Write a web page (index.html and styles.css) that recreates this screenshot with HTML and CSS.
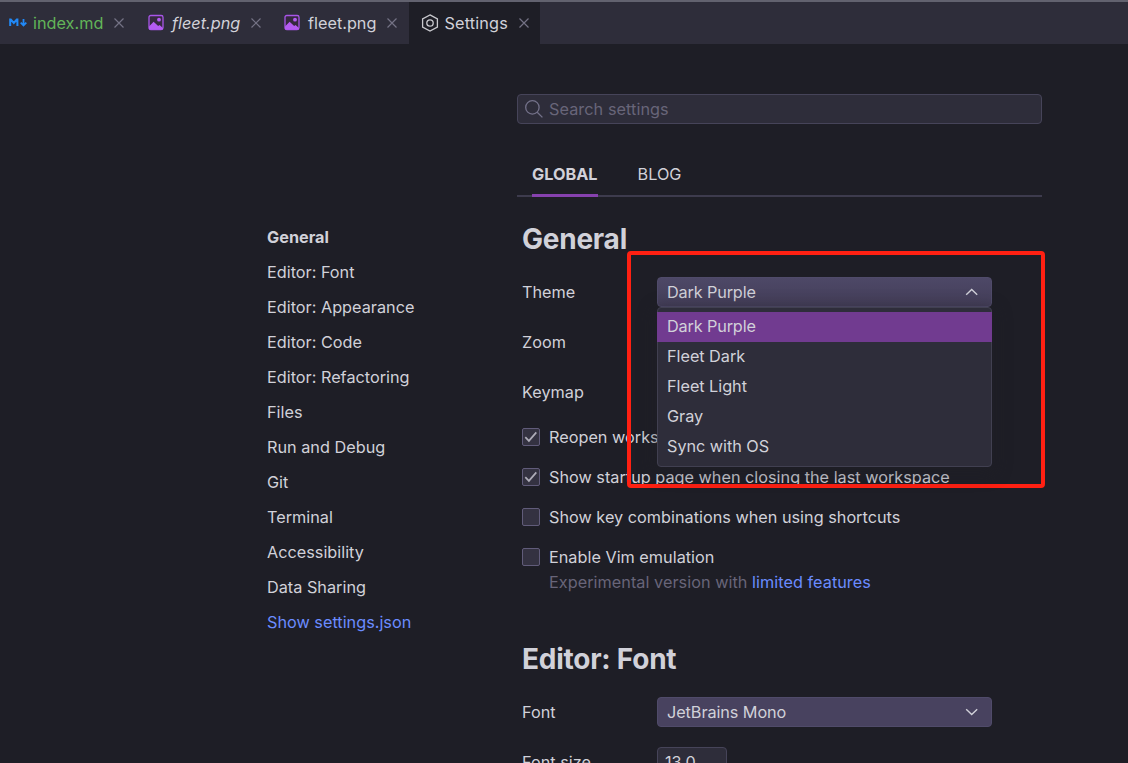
FILE: index.html
```html
<!DOCTYPE html>
<html lang="en">
<head>
<meta charset="utf-8">
<title>Settings</title>
<link rel="stylesheet" href="styles.css">
</head>
<body>
<header class="tabs">
  <div class="tab tab-first">
    <svg class="icon" width="18" height="18" viewBox="0 0 18 18"><path d="M1.200 12V5.600h.6L4.800 9l3-3.400h.6V12" fill="none" stroke="#2189f7" stroke-width="2"/><path d="M14.500 5v6.500M11.700 8.700l2.800 2.800 2.800-2.800" fill="none" stroke="#2189f7" stroke-width="1.800"/></svg>
    <span class="name name-md">index.md</span>
    <svg class="close" width="10" height="10" viewBox="0 0 10 10"><path d="M.5.5l9 9M9.500.5l-9 9"/></svg>
  </div>
  <div class="tab">
    <svg class="icon" width="18" height="18" viewBox="0 0 18 18"><rect x="1" y="1.500" width="14" height="14" rx="1.800" fill="#35293f" stroke="#a855e8" stroke-width="1.300"/><path d="M1 12.500l4.600-4.800 4.600 4.300 1.300-1.100 3.500 3v1.600H1z" fill="#b45bf2"/><circle cx="11" cy="5.700" r="1.900" fill="#b45bf2"/></svg>
    <span class="name name-italic">fleet.png</span>
    <svg class="close" width="10" height="10" viewBox="0 0 10 10"><path d="M.5.5l9 9M9.500.5l-9 9"/></svg>
  </div>
  <div class="tab">
    <svg class="icon" width="18" height="18" viewBox="0 0 18 18"><rect x="1" y="1.500" width="14" height="14" rx="1.800" fill="#35293f" stroke="#a855e8" stroke-width="1.300"/><path d="M1 12.500l4.600-4.800 4.600 4.300 1.300-1.100 3.500 3v1.600H1z" fill="#b45bf2"/><circle cx="11" cy="5.700" r="1.900" fill="#b45bf2"/></svg>
    <span class="name name-png">fleet.png</span>
    <svg class="close" width="10" height="10" viewBox="0 0 10 10"><path d="M.5.5l9 9M9.500.5l-9 9"/></svg>
  </div>
  <div class="tab tab-active">
    <svg class="icon" width="18" height="18" viewBox="0 0 18 18"><path d="M9 .9l7.400 4.100v8L9 17.100 1.600 13V5z" fill="none" stroke="#c9c9ce" stroke-width="1.300"/><circle cx="9" cy="9" r="3.200" fill="none" stroke="#c9c9ce" stroke-width="1.300"/></svg>
    <span class="name name-settings">Settings</span>
    <svg class="close" width="10" height="10" viewBox="0 0 10 10"><path d="M.5.5l9 9M9.500.5l-9 9"/></svg>
  </div>
</header>
<div class="page">
  <nav class="sections">
    <a class="current">General</a>
    <a>Editor: Font</a>
    <a>Editor: Appearance</a>
    <a>Editor: Code</a>
    <a>Editor: Refactoring</a>
    <a>Files</a>
    <a>Run and Debug</a>
    <a>Git</a>
    <a>Terminal</a>
    <a>Accessibility</a>
    <a>Data Sharing</a>
    <a class="link">Show settings.json</a>
  </nav>
  <main class="content">
    <div class="search">
      <svg width="18" height="18" viewBox="0 0 18 18" fill="none" stroke="#74728a" stroke-width="1.300"><circle cx="7.400" cy="7.400" r="6.700"/><path d="M12.200 12.200l5.200 5.200"/></svg>
      <span>Search settings</span>
    </div>
    <div class="scopes">
      <span class="scope scope-active">GLOBAL</span>
      <span class="scope">BLOG</span>
    </div>
    <section class="group">
      <h2>General</h2>
      <div class="row">
        <label>Theme</label>
        <div class="select select-open">
          <span>Dark Purple</span>
          <svg width="14" height="8" viewBox="0 0 14 8"><path d="M1.200 6.800L6.700 1.400l5.500 5.400"/></svg>
          <div class="menu">
            <div class="option chosen">Dark Purple</div>
            <div class="option">Fleet Dark</div>
            <div class="option">Fleet Light</div>
            <div class="option">Gray</div>
            <div class="option">Sync with OS</div>
          </div>
        </div>
      </div>
      <div class="row"><label>Zoom</label></div>
      <div class="row"><label>Keymap</label></div>
      <div class="check">
        <svg class="box" width="18" height="18" viewBox="0 0 18 18"><rect x=".5" y=".5" width="17" height="17" rx="1.500"/><path d="M3.300 9.200l3.600 3.700 7.400-8.500"/></svg>
        <span>Reopen works</span>
      </div>
      <div class="check">
        <svg class="box" width="18" height="18" viewBox="0 0 18 18"><rect x=".5" y=".5" width="17" height="17" rx="1.500"/><path d="M3.300 9.200l3.600 3.700 7.400-8.500"/></svg>
        <span>Show startup page when closing the last workspace</span>
      </div>
      <div class="check">
        <svg class="box" width="18" height="18" viewBox="0 0 18 18"><rect x=".5" y=".5" width="17" height="17" rx="1.500"/></svg>
        <span>Show key combinations when using shortcuts</span>
      </div>
      <div class="check">
        <svg class="box" width="18" height="18" viewBox="0 0 18 18"><rect x=".5" y=".5" width="17" height="17" rx="1.500"/></svg>
        <span>Enable Vim emulation</span>
      </div>
      <p class="hint">Experimental version with <a class="link">limited features</a></p>
    </section>
    <section class="group">
      <h2>Editor: Font</h2>
      <div class="row">
        <label>Font</label>
        <div class="select">
          <span>JetBrains Mono</span>
          <svg width="14" height="8" viewBox="0 0 14 8"><path d="M1.200 1.200l5.500 5.400 5.500-5.400"/></svg>
        </div>
      </div>
      <div class="row"><label>Font size</label><div class="field">13.0</div></div>
    </section>
  </main>
</div>
<div class="highlight"></div>
</body>
</html>
```

FILE: styles.css
```css
* { box-sizing: border-box; }

body {
  margin: 0;
  height: 763px;
  overflow: hidden;
  position: relative;
  background: #1e1e26;
  color: #d1d1d9;
  font: 16.25px/20px Inter, sans-serif;
  letter-spacing: 0;
  white-space: nowrap;
}

.tabs {
  display: flex;
  height: 44px;
  border-top: 2px solid #62626f;
  background: #2e2d3a;
}

.tab {
  display: flex;
  align-items: center;
  width: 136px;
  padding: 0 11px 0 12.4px;
}

.tab-first { padding-left: 9px; padding-right: 12px; }
.tab-active { width: 131.5px; margin-left: .5px; background: #1e1e26; }
.icon { flex: none; margin-right: 5.6px; }
.tab-first .icon { margin-right: 6px; }
.close {
  margin-left: auto;
  fill: none;
  stroke: #747285;
  stroke-width: 1.2;
}
.name-md { color: #62b558; }
.name-italic { font-style: italic; }
.name-settings { letter-spacing: .15px; }

.page { display: flex; padding-left: 267px; }

.sections {
  display: flex;
  flex-direction: column;
  gap: 15px;
  width: 250px;
  padding-top: 183px;
}
.current { font-weight: 700; }
.link { color: #6b8cff; }

.content { width: 525px; padding-top: 50px; }

.search {
  display: flex;
  align-items: center;
  gap: 6px;
  height: 30px;
  padding-left: 7px;
  border: 1px solid #464459;
  border-radius: 4px;
  background: #2e2d3a;
  color: #686579;
  letter-spacing: .06px;
}

.scopes {
  display: flex;
  gap: 40px;
  height: 73px;
  padding: 40px 0 0 15px;
  border-bottom: 2px solid #3d3b4d;
}
.scope { height: 33px; }
.scope-active { font-weight: 700; border-bottom: 3px solid #8641ae; }

.group { padding: 22px 0 0 5px; }
.group + .group { padding-top: 47px; }

h2 {
  margin: 0;
  font-size: 28px;
  line-height: 40px;
  font-weight: 700;
  letter-spacing: -0.24px;
}

.row { display: flex; align-items: center; height: 50px; }
h2 + .row { margin-top: 8px; }
.row label { width: 135px; }

.select {
  position: relative;
  display: flex;
  align-items: center;
  justify-content: space-between;
  width: 335px;
  height: 30px;
  padding: 0 12px 0 9px;
  border: 1px solid #504b6a;
  border-radius: 4px;
  background: #48425f;
  letter-spacing: -0.08px;
}
.select svg { fill: none; stroke: #d1d1d9; stroke-width: 1.4; }
.select-open { background: linear-gradient(#4d4867, #443e59); letter-spacing: -0.15px; }

.menu {
  position: absolute;
  z-index: 1;
  top: 29px;
  left: -1px;
  width: 335px;
  height: 160px;
  padding-top: 4px;
  border: 1px solid #414051;
  border-radius: 4px;
  background: #2e2d3a;
  box-shadow: 0 4px 16px 4px rgba(30, 30, 38, .42);
  letter-spacing: -0.04px;
}
.option { height: 30px; padding-left: 9px; line-height: 28px; }
.chosen { margin: 0 -1px; padding-left: 10px; background: #713b90; letter-spacing: -0.15px; }

.check { display: flex; align-items: center; gap: 9px; height: 40px; }
.box { fill: #343241; stroke: #615c7a; }
.box path { fill: none; stroke: #aeacb8; stroke-width: 1.7; }

.hint { margin: -5px 0 0 27px; color: #686579; letter-spacing: .03px; }

.field {
  width: 70px;
  height: 30px;
  padding: 4px 7px;
  border: 1px solid #464459;
  border-radius: 4px;
  background: #2e2d3a;
}

/* Annotation frame over the open theme menu */
.highlight {
  position: absolute;
  left: 627px;
  top: 251px;
  width: 418px;
  height: 237px;
  border: 4px solid #ff2012;
  border-radius: 4px;
}
```
